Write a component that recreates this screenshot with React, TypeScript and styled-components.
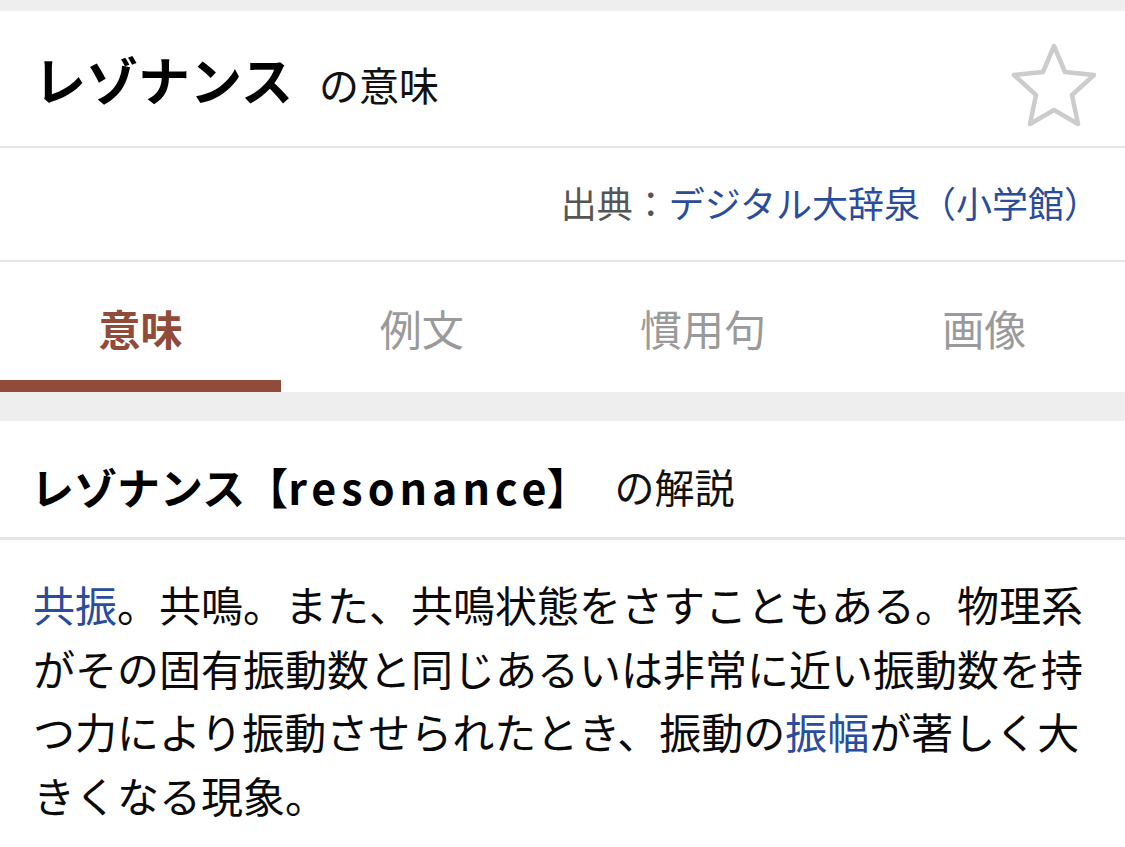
import React from "react";
import styled, { createGlobalStyle } from "styled-components";

const GlobalStyle = createGlobalStyle`
  body {
    margin: 0;
    background: #eeeeee;
    font-family: "Noto Sans CJK JP", "Noto Sans", sans-serif;
    color: #111111;
  }
`;

const tabs = ["意味", "例文", "慣用句", "画像"];

const App = () => {
  return (
    <>
      <GlobalStyle />
      <Page>
        <HeaderCard>
          <TitleRow>
            <Title>レゾナンス</Title>
            <TitleSuffix>の意味</TitleSuffix>
          </TitleRow>
          <StarButton aria-label="お気に入り">
            <svg width="94" height="90" viewBox="0 0 94 90">
              <polygon
                points="47,6 58,32 87,35 65,55 71,84 47,70 23,84 29,55 7,35 36,32"
                fill="none"
                stroke="#cccccc"
                strokeWidth="4.5"
                strokeLinejoin="round"
              />
            </svg>
          </StarButton>
        </HeaderCard>
        <SourceRow>
          <SourceLabel>出典：</SourceLabel>
          <SourceLink>デジタル大辞泉（小学館）</SourceLink>
        </SourceRow>
        <TabBar>
          {tabs.map((t, i) => (
            <Tab key={t} active={i === 0}>
              {t}
            </Tab>
          ))}
        </TabBar>
        <Section>
          <SectionHead>
            <SectionTitle>
              レゾナンス【<Latin>resonance</Latin>】
            </SectionTitle>
            <SectionSuffix>の解説</SectionSuffix>
          </SectionHead>
          <Body>
            <Link>共振</Link>。共鳴。また、共鳴状態をさすこともある。物理系がその固有振動数と同じあるいは非常に近い振動数を持つ力により振動させられたとき、振動の<Link>振幅</Link>が著しく大きくなる現象。
          </Body>
        </Section>
      </Page>
    </>
  );
};

const Page = styled.div`
  width: 1125px;
  min-height: 847px;
  padding-top: 11px;
  display: flex;
  flex-direction: column;
  background: #eeeeee;
`;

const HeaderCard = styled.header`
  height: 137px;
  background: #ffffff;
  border-bottom: 2px solid #e4e4e4;
  display: flex;
  align-items: center;
  justify-content: space-between;
  padding: 0 24px 0 34px;
  box-sizing: border-box;
`;

const TitleRow = styled.div`
  display: flex;
  align-items: baseline;
  gap: 26px;
`;

const Title = styled.h1`
  margin: 0;
  font-size: 52px;
  font-weight: 700;
  color: #000000;
  line-height: 1;
`;

const TitleSuffix = styled.span`
  font-size: 40px;
  color: #111111;
  line-height: 1;
`;

const StarButton = styled.div`
  width: 94px;
  height: 90px;
  display: flex;
  align-items: center;
  justify-content: center;
  margin-top: 12px;
`;

const SourceRow = styled.div`
  height: 114px;
  background: #ffffff;
  border-bottom: 2px solid #e4e4e4;
  display: flex;
  align-items: center;
  justify-content: flex-end;
  padding: 0 25px 4px 0;
  box-sizing: border-box;
  font-size: 36px;
`;

const SourceLabel = styled.span`
  color: #555555;
`;

const SourceLink = styled.span`
  color: #2a4c9c;
`;

const TabBar = styled.nav`
  height: 130px;
  background: #ffffff;
  display: grid;
  grid-template-columns: repeat(4, 1fr);
`;

const Tab = styled.div<{ active?: boolean }>`
  display: flex;
  align-items: center;
  justify-content: center;
  padding-top: 12px;
  font-size: 42px;
  font-weight: ${(p) => (p.active ? 700 : 400)};
  color: ${(p) => (p.active ? "#904b3a" : "#9a9a9a")};
  border-bottom: 12px solid ${(p) => (p.active ? "#904b3a" : "transparent")};
`;

const Section = styled.section`
  margin-top: 29px;
  background: #ffffff;
  flex: 1;
`;

const SectionHead = styled.div`
  height: 119px;
  border-bottom: 3px solid #e4e4e4;
  display: flex;
  align-items: center;
  padding: 14px 0 0 31px;
  box-sizing: border-box;
  gap: 25px;
`;

const SectionTitle = styled.h2`
  margin: 0;
  font-size: 43px;
  font-weight: 700;
  color: #000000;
`;

const Latin = styled.span`
  letter-spacing: 5px;
  margin-right: -5px;
`;

const SectionSuffix = styled.span`
  font-size: 40px;
  color: #111111;
`;

const Body = styled.p`
  margin: 0;
  width: 1060px;
  padding: 32px 0 0 33px;
  font-size: 42px;
  line-height: 63.5px;
  color: #0a0a0a;
`;

const Link = styled.span`
  color: #2a4c9c;
`;

export default App;
